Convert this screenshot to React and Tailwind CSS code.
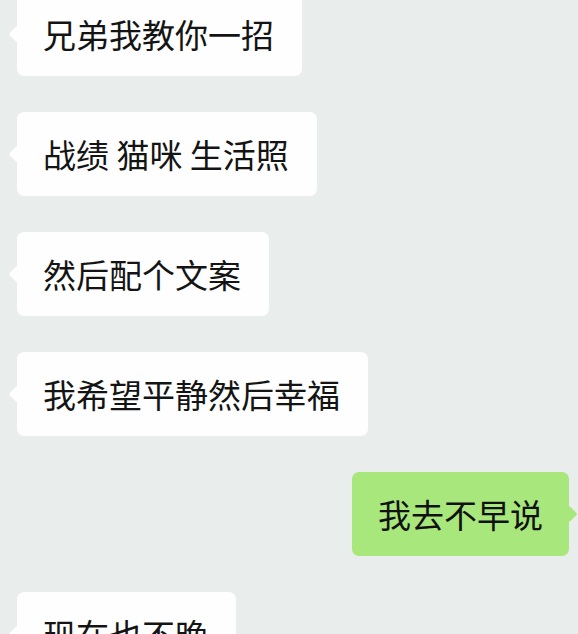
const messages = [
  { text: '兄弟我教你一招', mine: false },
  { text: '战绩 猫咪 生活照', mine: false },
  { text: '然后配个文案', mine: false },
  { text: '我希望平静然后幸福', mine: false },
  { text: '我去不早说', mine: true },
  { text: '现在也不晚', mine: false },
];

function Bubble({ text, mine }) {
  if (mine) {
    return (
      <div className="flex justify-end pr-[9px]">
        <div className="relative h-[84px] flex items-center px-[26px] rounded-[7px] bg-[#a8e77b] text-[#111]">
          <span className="absolute right-[-6px] top-[36px] w-[12px] h-[12px] rotate-45 rounded-[2px] bg-[#a8e77b]" />
          <span className="relative">{text}</span>
        </div>
      </div>
    );
  }
  return (
    <div className="flex justify-start pl-[17px]">
      <div className="relative h-[84px] flex items-center pl-[26px] pr-[28px] rounded-[7px] bg-[#fdfefd] text-[#141414]">
        <span className="absolute left-[-6px] top-[36px] w-[12px] h-[12px] rotate-45 rounded-[2px] bg-[#fdfefd]" />
        <span className="relative">{text}</span>
      </div>
    </div>
  );
}

export default function App() {
  return (
    <div
      className="w-[578px] h-[634px] overflow-hidden bg-[#e9edeb] text-[33px] leading-none"
      style={{ fontFamily: '"Noto Sans CJK SC", "Noto Sans", sans-serif' }}
    >
      <div className="flex flex-col gap-[36px] mt-[-8px]">
        {messages.map((m, i) => (
          <Bubble key={i} text={m.text} mine={m.mine} />
        ))}
      </div>
    </div>
  );
}
